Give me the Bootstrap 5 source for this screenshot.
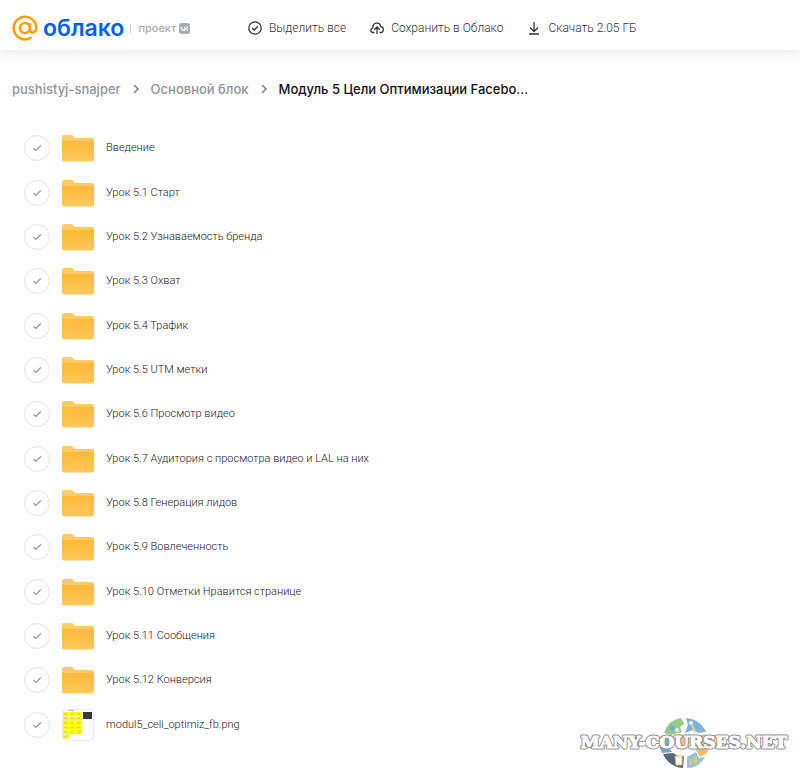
<!DOCTYPE html>
<html lang="ru">
<head>
<meta charset="utf-8">
<meta name="viewport" content="width=device-width, initial-scale=1">
<title>Облако</title>
<link href="https://cdn.jsdelivr.net/npm/bootstrap@5.3.0/dist/css/bootstrap.min.css" rel="stylesheet">
<style>
body{font-family:Inter,"Noto Sans",sans-serif;font-size:12px;line-height:20px;color:#444;background:#fefefe;position:relative;min-height:100vh}
.topbar{height:50px;padding:6px 12px 0;background:#fff;box-shadow:0 1px 12px rgba(0,16,61,.1)}
.brand{width:236px;text-decoration:none}
.brand-word{font-size:23px;line-height:28px;font-weight:600;color:#005ff9;margin-left:5px}
.project{font-size:11px;font-weight:500;color:#aaadb3;gap:3px}
.divider{width:1px;height:9px;background:#c3c6cb;margin:0 7px 0 6px}
.tool{border:0;background:none;padding:0;color:#333;gap:7px;font-family:Roboto,sans-serif;font-size:12px;font-weight:300}
.tools{gap:24px}
.crumbs{padding:29px 12px 0;font-size:13px;font-weight:500;gap:11px}
.crumbs a{color:#919399;text-decoration:none}
.crumbs .current{color:#111}
.files{padding:27px 24px 0}
.file-row{height:44px;gap:12px}
.file-row:nth-child(3n+2){height:45px}
.pick{appearance:none;width:26px;height:26px;margin:0;border:1px solid #e4e5e8;border-radius:50%;background:#fff url("data:image/svg+xml,%3Csvg xmlns='http://www.w3.org/2000/svg' viewBox='0 0 24 24'%3E%3Cpath d='M8.5 12.2l2.3 2.3 5-5' fill='none' stroke='%238e9094' stroke-width='1.2'/%3E%3C/svg%3E") center/24px no-repeat}
.pick:checked{border-color:#005ff9}
.file-name{color:#222;text-decoration:none;font-family:Roboto,sans-serif;font-size:11px;font-weight:300}
.watermark{position:absolute;right:6px;bottom:5px;width:220px;height:54px}
.watermark text{font:700 17px "DejaVu Serif",serif;stroke-linejoin:round}
</style>
</head>
<body>
<svg width="0" height="0" class="position-absolute" aria-hidden="true">
<defs>
<linearGradient id="fold" x1="0" y1="0" x2="0" y2="1"><stop offset="0" stop-color="#ffb937"/><stop offset="1" stop-color="#ffc85c"/></linearGradient>
<symbol id="folder" viewBox="0 0 32 32"><path d="M0 5q0-2 2-2h7.500q1.500 0 2.500 2l.5 1H30q2 0 2 2v5H0z" fill="#ffcb62"/><path d="M0 9h32v18.500q0 2-2 2H2q-2 0-2-2z" fill="url(#fold)"/></symbol>
<symbol id="chev" viewBox="0 0 8 10"><path d="M2 1l4 4-4 4" fill="none" stroke="#85878c" stroke-width="1.700"/></symbol>
</defs>
</svg>
<header class="topbar d-flex align-items-center">
<a class="brand d-flex align-items-center flex-shrink-0" href="#">
<svg width="26" height="26" viewBox="0 0 26 26" fill="none" stroke="#ff9e00" stroke-width="2.600" aria-hidden="true"><circle cx="13" cy="13" r="5"/><path d="M18 8v6.500c0 4.500 6.300 3.800 6.300-1.500A11.300 11.300 0 1 0 19.500 22.300"/></svg>
<span class="brand-word">облако</span>
<span class="divider"></span>
<span class="project d-flex align-items-center">проект<svg width="11" height="11" viewBox="0 0 11 11" aria-hidden="true"><rect width="11" height="11" rx="2.500" fill="#a9acb1"/><path d="M2 3.700c.2 2.500 1.500 3.700 3.500 3.700V3.700M8.700 3.500C8.200 4.800 7 5.500 5.700 5.500c1.400 0 2.500.8 3 2" fill="none" stroke="#fff" stroke-width="1.200"/></svg></span>
</a>
<div class="tools d-flex align-items-center text-nowrap">
<button type="button" class="tool d-flex align-items-center"><svg width="14" height="14" viewBox="0 0 14 14" fill="none" stroke="#333" stroke-width="1.300" aria-hidden="true"><circle cx="7" cy="7" r="6.200"/><path d="M4.200 7l2 2 3.700-3.700"/></svg>Выделить все</button>
<button type="button" class="tool d-flex align-items-center"><svg width="14" height="14" viewBox="0 0 14 14" fill="none" stroke="#333" stroke-width="1.300" aria-hidden="true"><path d="M4.500 11.500H3.300C.2 11.500 0 7.400 2.900 6.800 2.500 1 10.100.5 10.700 5.600c3.600.3 3.300 5.900 0 5.900H9.500M7 13V6.200M4.200 8.700L7 6l2.800 2.700"/></svg>Сохранить в Облако</button>
<button type="button" class="tool d-flex align-items-center"><svg width="14" height="14" viewBox="0 0 14 14" fill="none" stroke="#333" stroke-width="1.300" aria-hidden="true"><path d="M7 1v9M3 6.500l4 4 4-4M2 13h10"/></svg>Скачать 2.05 ГБ</button>
</div>
</header>
<main>
<nav class="crumbs d-flex align-items-center text-nowrap" aria-label="Путь">
<a href="#">pushistyj-snajper</a><svg width="8" height="10" aria-hidden="true"><use href="#chev"/></svg>
<a href="#">Основной блок</a><svg width="8" height="10" aria-hidden="true"><use href="#chev"/></svg>
<span class="current" aria-current="page">Модуль 5 Цели Оптимизации Facebo...</span>
</nav>
<ul class="files list-unstyled mb-0" id="files"></ul>
</main>
<svg class="watermark" viewBox="0 0 220 54" role="img" aria-label="MANY-COURSES.NET">
<g opacity=".75" transform="translate(3)">
<path d="M87 17Q91 4 104 2l3 6-4 3 2 5-11 3z" fill="#6fbd5b"/><path d="M109 2q14 1 20 14l-8 1-5-3-8 3 3-8z" fill="#4c9bd8"/>
<path d="M128 18q6 9 2 19l-7 4-4-7 3-8-4-6z" fill="#f2a33a"/><path d="M84 20l9 3-2 7 4 6-10 1q-5-9-1-17z" fill="#428bc0"/>
<path d="M86 38l10-1 7 4 4-1-1 12Q92 51 86 38z" fill="#21364e"/><path d="M110 41l9-5 3 6 6-1q-6 11-18 11z" fill="#77aed0"/>
<path d="M98 40h7v9h-6z" fill="#fff" stroke="#cfa547"/><circle cx="95" cy="12" r="2.500" fill="#438bd2"/><circle cx="100" cy="14" r="2" fill="#eee"/><circle cx="114" cy="7" r="2" fill="#dce9f5"/><path d="M115 9l3 7" stroke="#f5b64c" stroke-width="2"/><path d="M112 43h3v6h-3m5-8h3v7h-3" fill="#d6bb48"/><circle cx="107" cy="26" r="6" fill="#f7b34b"/>
</g>
<g text-anchor="middle" fill="#fff">
<text x="110" y="32" stroke="#8a8a8a" stroke-width="3" paint-order="stroke" aria-hidden="true">MANY-COURSES.NET</text>
<text x="110" y="32" stroke="#fff" stroke-width="1">MANY-COURSES.NET</text>
</g>
</svg>
<script src="https://cdn.jsdelivr.net/npm/bootstrap@5.3.0/dist/js/bootstrap.bundle.min.js"></script>
<script>
const names=["Введение","Урок 5.1 Старт","Урок 5.2 Узнаваемость бренда","Урок 5.3 Охват","Урок 5.4 Трафик","Урок 5.5 UTM метки","Урок 5.6 Просмотр видео","Урок 5.7 Аудитория с просмотра видео и LAL на них","Урок 5.8 Генерация лидов","Урок 5.9 Вовлеченность","Урок 5.10 Отметки Нравится странице","Урок 5.11 Сообщения","Урок 5.12 Конверсия","modul5_celi_optimiz_fb.png"];
const folder='<svg width="32" height="32" aria-hidden="true"><use href="#folder"/></svg>';
let cells='';
for(let r=0;r<6;r++)for(let c=0;c<3;c++){if(r===5&&c)continue;cells+=`<rect x="${1+c*6.5}" y="${3+r*4.5}" width="6.200" height="4.200" fill="#fbf51c"/><path d="M${2+c*6.5} ${5+r*4.5}h3" stroke="#d0cc30" stroke-width=".7"/>`}
const thumb=`<svg width="32" height="32" viewBox="0 0 32 32" aria-hidden="true"><rect x=".5" y=".5" width="31" height="31" rx="4" fill="#fff" stroke="#ebebed"/><path d="M6 1.500h6" stroke="#bbb"/>${cells}<rect x="21" y="3" width="9" height="7" fill="#363a3e"/></svg>`;
document.getElementById('files').innerHTML=names.map((n,i)=>`<li class="file-row d-flex align-items-center"><input class="pick flex-shrink-0" type="checkbox" id="f${i}" aria-label="${n}">${i===13?thumb:folder}<a class="file-name" href="#">${n}</a></li>`).join('');
</script>
</body>
</html>
